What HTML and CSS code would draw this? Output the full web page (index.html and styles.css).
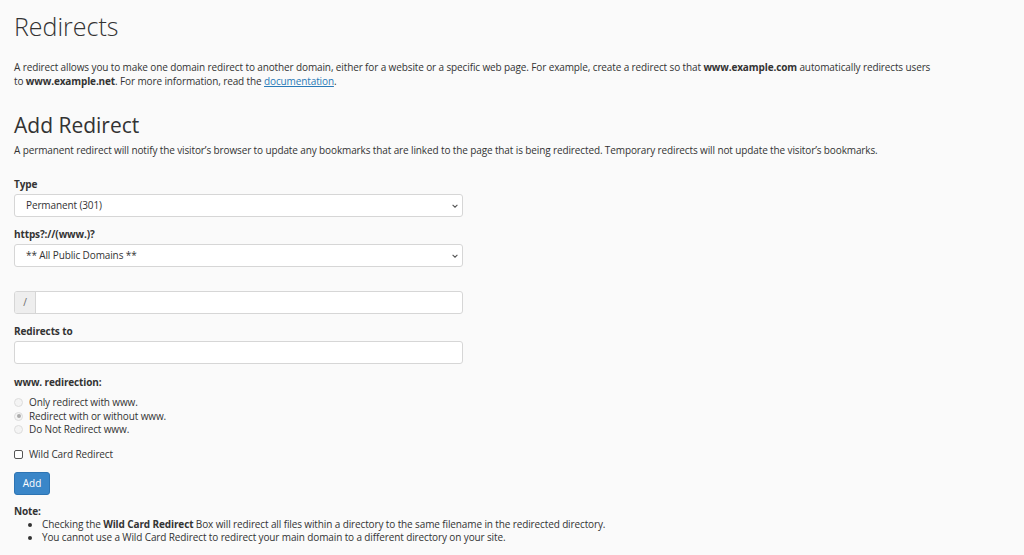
FILE: index.html
```html
<!DOCTYPE html>
<html lang="en">
<head>
<meta charset="utf-8">
<title>Redirects</title>
<link rel="stylesheet" href="styles.css">
</head>
<body>
<main class="page">
  <h1 class="title">Redirects</h1>
  <p class="intro">A redirect allows you to make one domain redirect to another domain, either for a website or a specific web page. For example, create a redirect so that <b>www.example.com</b> automatically redirects users<br>to <b>www.example.net</b>. For more information, read the <a href="#">documentation</a>.</p>

  <h2 class="subtitle">Add Redirect</h2>
  <p class="desc">A permanent redirect will notify the visitor’s browser to update any bookmarks that are linked to the page that is being redirected. Temporary redirects will not update the visitor’s bookmarks.</p>

  <form class="form">
    <div class="field">
      <label class="label">Type</label>
      <div class="control select">
        <span>Permanent (301)</span>
        <svg class="caret" viewBox="0 0 10 6" width="6" height="4"><path d="M1 1l4 4 4-4" fill="none" stroke="#555" stroke-width="1.8"/></svg>
      </div>
    </div>
    <div class="field">
      <label class="label">https?://(www.)?</label>
      <div class="control select">
        <span>** All Public Domains **</span>
        <svg class="caret" viewBox="0 0 10 6" width="6" height="4"><path d="M1 1l4 4 4-4" fill="none" stroke="#555" stroke-width="1.8"/></svg>
      </div>
    </div>
    <div class="field field-path">
      <div class="control group">
        <span class="addon">/</span>
        <span class="group-input"></span>
      </div>
    </div>
    <div class="field field-target">
      <label class="label">Redirects to</label>
      <div class="control"></div>
    </div>
    <div class="field">
      <label class="label">www. redirection:</label>
      <div class="radios">
        <div class="radio"><span class="dot"></span>Only redirect with www.</div>
        <div class="radio"><span class="dot checked"></span>Redirect with or without www.</div>
        <div class="radio"><span class="dot"></span>Do Not Redirect www.</div>
      </div>
    </div>
    <div class="check"><span class="box"></span>Wild Card Redirect</div>
    <button type="button" class="btn">Add</button>
  </form>

  <div class="note">
    <div class="note-title">Note:</div>
    <ul class="note-list">
      <li>Checking the <b>Wild Card Redirect</b> Box will redirect all files within a directory to the same filename in the redirected directory.</li>
      <li>You cannot use a Wild Card Redirect to redirect your main domain to a different directory on your site.</li>
    </ul>
  </div>
</main>
</body>
</html>
```
FILE: styles.css
```css
* { box-sizing: border-box; }
html, body { margin: 0; padding: 0; }
body {
  background: #fafafa;
  color: #333;
  font-family: "Open Sans", "Liberation Sans", sans-serif;
  font-size: 10px;
  letter-spacing: -0.12px;
  line-height: 13px;
}
b { font-weight: 700; }
.page { padding: 8px 14px 0 14px; }
.title {
  margin: 0;
  font-size: 25px;
  font-weight: 300;
  line-height: 36px;
  letter-spacing: 0;
  color: #333;
}
.intro { margin: 16px 0 0 0; line-height: 14px; }
.intro a { color: #2a7ab8; text-decoration: underline; }
.subtitle {
  margin: 24px 0 0 0;
  font-size: 21px;
  font-weight: 500;
  line-height: 26px;
  letter-spacing: 0;
}
.desc { margin: 6px 0 0 0; }
.form { margin-top: 21px; width: 449px; }
.field { margin-bottom: 11px; }
.label { display: block; font-weight: 700; margin-bottom: 3px; }
.control {
  height: 23px;
  background: #fff;
  border: 1px solid #d6d6d6;
  border-radius: 3px;
}
.select {
  display: flex;
  align-items: center;
  justify-content: space-between;
  padding: 0 4px 0 11px;
}
.field-path { margin-top: 24px; margin-bottom: 11px; }
.field-target { margin-bottom: 12px; }
.group { display: flex; overflow: hidden; }
.addon {
  width: 21px;
  background: #eee;
  border-right: 1px solid #d6d6d6;
  display: flex;
  align-items: center;
  justify-content: center;
  color: #666;
}
.group-input { flex: 1; }
.radios { display: flex; flex-direction: column; margin-top: 7px; }
.radio { display: flex; align-items: center; height: 13.5px; }
.dot {
  width: 9px; height: 9px;
  border: 1px solid #ddd;
  border-radius: 50%;
  background: #f4f4f4;
  margin-right: 6px;
  display: inline-flex;
  align-items: center;
  justify-content: center;
}
.dot.checked::after {
  content: "";
  width: 4px; height: 4px;
  border-radius: 50%;
  background: #aaa;
}
.check { display: flex; align-items: center; }
.box {
  width: 9px; height: 9px;
  border: 1px solid #555;
  border-radius: 2px;
  background: #fff;
  margin-right: 6px;
}
.btn {
  margin-top: 11px;
  width: 36px;
  height: 23px;
  background: #3a86c8;
  border: 1px solid #2d74b3;
  border-radius: 3px;
  color: #fff;
  font-family: inherit;
  font-size: 10px;
  padding: 0;
}
.note { margin-top: 10px; }
.note-title { font-weight: 700; }
.note-list { margin: 0; padding-left: 28px; }
```
